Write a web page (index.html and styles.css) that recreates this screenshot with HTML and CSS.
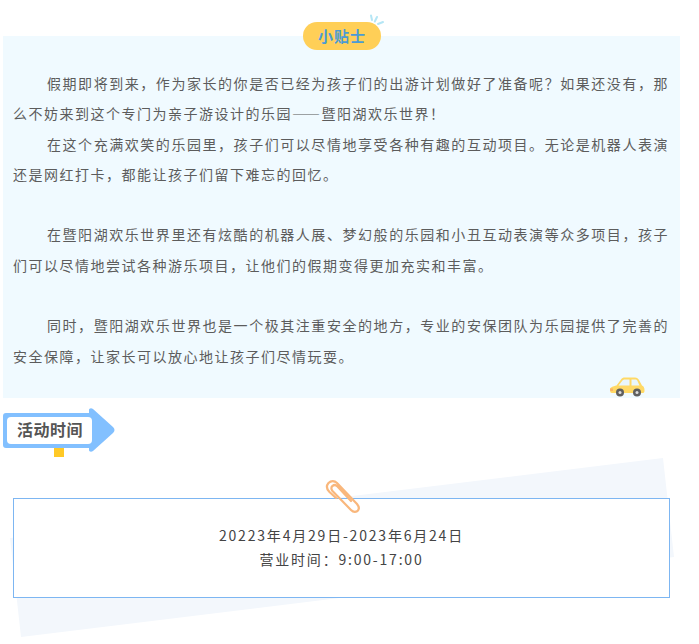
FILE: index.html
```html
<!DOCTYPE html>
<html lang="zh-CN">
<head>
<meta charset="utf-8">
<title>小贴士</title>
<link rel="stylesheet" href="styles.css">
</head>
<body>
<div class="page">
  <section class="tips">
    <div class="badge">小贴士
      <svg class="spark" viewBox="0 0 16 16" width="16" height="16"><path d="M2 1.500 3 6M8 3 5.800 7.500M14 8 9 10" fill="none" stroke="#b5e6f5" stroke-width="2" stroke-linecap="round"/></svg>
    </div>
    <p class="para">假期即将到来，作为家长的你是否已经为孩子们的出游计划做好了准备呢？如果还没有，那么不妨来到这个专门为亲子游设计的乐园——暨阳湖欢乐世界！</p>
    <p class="para">在这个充满欢笑的乐园里，孩子们可以尽情地享受各种有趣的互动项目。无论是机器人表演还是网红打卡，都能让孩子们留下难忘的回忆。</p>
    <p class="blank">&nbsp;</p>
    <p class="para">在暨阳湖欢乐世界里还有炫酷的机器人展、梦幻般的乐园和小丑互动表演等众多项目，孩子们可以尽情地尝试各种游乐项目，让他们的假期变得更加充实和丰富。</p>
    <p class="blank">&nbsp;</p>
    <p class="para">同时，暨阳湖欢乐世界也是一个极其注重安全的地方，专业的安保团队为乐园提供了完善的安全保障，让家长可以放心地让孩子们尽情玩耍。</p>
    <svg class="car" viewBox="0 0 36 21" width="36" height="21">
      <path d="M1 13.500C1 11 4 10.500 7.500 9.500L12 3.500C13 2 14 1.500 16 1.500H26C28 1.500 29 2.500 30 4L33 9.500C35 10.500 35.500 12 35.500 14.500C35.500 16.500 35 17 33 17H3C1.500 17 1 16 1 13.500Z" fill="#ffd966"/>
      <path d="M9.500 9.500 13.500 4.500C14 3.800 15 3.500 16 3.500H20.500V9.500ZM22.500 3.500H26.500C27.500 3.500 28 4 28.500 5L30.500 9.500H22.500Z" fill="#e9f6fb"/>
      <path d="M1 12.500H4V15H1.300Z" fill="#fbb267"/>
      <circle cx="11" cy="16.500" r="4" fill="#5f5f5f"/><circle cx="11" cy="16.500" r="1.500" fill="#ddd"/>
      <circle cx="28" cy="16.500" r="4" fill="#5f5f5f"/><circle cx="28" cy="16.500" r="1.500" fill="#ddd"/>
    </svg>
  </section>

  <div class="heading">
    <svg class="arrow" viewBox="0 0 112 50" width="112" height="50">
      <rect x="51" y="40" width="10" height="9" fill="#ffc926"/>
      <path d="M3 5H86V2C86 0.500 88 -0.500 90 1L110 19C112 21 112 23 110 25L90 43C88 44.500 86 43.500 86 42V40H3C1 40 0 39 0 37V8C0 6 1 5 3 5Z" fill="#82c0ff"/>
      <rect x="4" y="9" width="85" height="27" rx="4" fill="#fff"/>
    </svg>
    <h2 class="heading-text">活动时间</h2>
  </div>

  <section class="event">
    <svg class="tilt" viewBox="0 0 699 200" width="699" height="200"><polygon points="663,8 674,107 21,187 10,88" fill="#f3f7fc"/></svg>
    <svg class="clip" viewBox="0 0 38 34" width="38" height="34">
      <path d="M12 19 5.500 13C3 10.500 2 7 4.500 4C7 1.500 10.500 1.500 13 4L33 25C35.500 28 35.500 30 33.500 32C31 33.500 29 33 27 31L8.500 12C7 10 7 8 8.500 7C10 5.500 12 6 13.500 7.500L27 22" fill="none" stroke="#f9b77c" stroke-width="2.200" stroke-linecap="round" stroke-linejoin="round"/>
    </svg>
    <div class="card">
      <p class="card-line">20223年4月29日-2023年6月24日</p>
      <p class="card-line">营业时间：9:00-17:00</p>
    </div>
  </section>
</div>
</body>
</html>
```

FILE: styles.css
```css
* { box-sizing: border-box; }
html, body { margin: 0; padding: 0; background: #fff; }
body { font-family: "Noto Sans CJK SC", "Noto Sans", sans-serif; color: #555; overflow: hidden; }
.page { width: 680px; height: 644px; padding: 36px 0 0 3px; }
.tips { position: relative; width: 677px; height: 362px; background: #f0faff; padding: 32px 11px 0 10px; }
.badge { position: absolute; left: 300px; top: -14px; width: 78px; height: 28px; border-radius: 14px; background: #ffcf57; color: #4a9bd4; font-size: 15px; font-weight: 700; letter-spacing: 1px; line-height: 28px; text-align: center; }
.spark { position: absolute; left: 66px; top: -8px; }
.para, .blank { margin: 0; font-size: 14px; line-height: 30.3px; letter-spacing: 1.5px; color: #5c5c5c; }
.para { text-indent: 34px; text-align: justify; }
.car { position: absolute; left: 606px; top: 340px; }
.heading { position: relative; margin-top: 10px; height: 50px; width: 112px; }
.arrow { display: block; }
.heading-text { position: absolute; left: 14px; top: 8px; margin: 0; font-size: 16px; line-height: 27px; font-weight: 700; letter-spacing: 0.5px; color: #555; white-space: nowrap; }
.event { position: relative; margin-top: 40px; padding: 0 0 0 10px; }
.tilt { position: absolute; left: -3px; top: -48px; }
.clip { position: absolute; left: 321px; top: -19px; z-index: 2; }
.card { position: relative; width: 657px; height: 100px; border: 1px solid #7db6f2; background: #fff; padding-top: 24px; text-align: center; }
.card-line { margin: 0; font-size: 14px; line-height: 24px; letter-spacing: 1.8px; color: #444; }
```
